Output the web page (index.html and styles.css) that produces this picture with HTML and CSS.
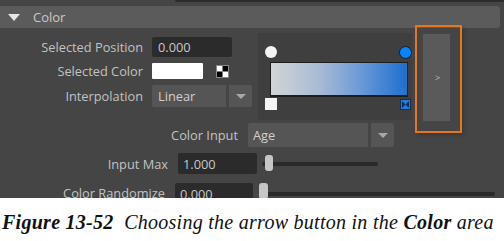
FILE: index.html
```html
<!DOCTYPE html>
<html>
<head>
<meta charset="utf-8">
<link rel="stylesheet" href="styles.css">
</head>
<body>
<div class="shot">
  <div class="topstrip"><div class="topfield"></div></div>
  <div class="header"><span class="tri"></span><span class="htitle">Color</span></div>
  <div class="upper">
    <div class="form">
      <div class="row r1"><span class="lbl w143">Selected Position</span><div class="field f80">0.000</div></div>
      <div class="row r2"><span class="lbl w143">Selected Color</span><div class="swatch"></div>
        <svg class="checker" width="13" height="13" viewBox="0 0 13 13"><rect x="0.5" y="0.5" width="12" height="12" fill="#fff" stroke="#888"/><rect x="6.5" y="1" width="5.5" height="5.5" fill="#000"/><rect x="1" y="6.5" width="5.5" height="5.5" fill="#000"/></svg>
      </div>
      <div class="row r3"><span class="lbl w143">Interpolation</span>
        <div class="combo"><div class="combo-main c74">Linear</div><div class="combo-arrow"><span class="caret"></span></div></div>
      </div>
    </div>
    <div class="grad-panel">
      <div class="marks top"><span class="dot white"></span><span class="dot blue"></span></div>
      <div class="ramp"></div>
      <div class="marks bottom"><span class="sq"></span>
        <svg class="bsq" width="11" height="11" viewBox="0 0 11 11"><rect x="0.5" y="0.5" width="10" height="10" fill="#1f7ee2" stroke="#0e2f5a"/><polygon points="2,2 5.5,5.5 2,9" fill="#0e2f5a"/><polygon points="9,2 5.5,5.5 9,9" fill="#0e2f5a"/></svg>
      </div>
    </div>
    <div class="side-btn"><span class="chev">&gt;</span></div>
  </div>
  <div class="lower">
    <div class="row l1"><span class="lbl w238">Color Input</span>
      <div class="combo tall"><div class="combo-main c120">Age</div><div class="combo-arrow"><span class="caret"></span></div></div>
    </div>
    <div class="row l2"><span class="lbl w168">Input Max</span><div class="field f79">1.000</div>
      <div class="slider s1"><span class="track"></span><span class="handle"></span></div>
    </div>
    <div class="row l3"><span class="lbl w165">Color Randomize</span><div class="field f78">0.000</div>
      <div class="slider s2"><span class="track"></span><span class="handle"></span></div>
    </div>
  </div>
  <div class="highlight"></div>
</div>
<p class="caption"><b>Figure 13-52</b>&nbsp; Choosing the arrow button in the <b>Color</b> area</p>
</body>
</html>
```
FILE: styles.css
```css
html, body { margin: 0; padding: 0; background: #fff; }
body { width: 504px; height: 241px; overflow: hidden; }
.shot {
  position: relative;
  width: 504px; height: 198px; overflow: hidden;
  background: #454545;
  font-family: "Open Sans", "DejaVu Sans", sans-serif;
  font-size: 12.8px; color: #c2c2c2;
}
.topstrip { height: 6px; display: flex; justify-content: flex-end; }
.topfield { width: 329px; height: 2px; background: #2c2c2c; border-bottom-left-radius: 2px; }
.header {
  width: 500px; height: 22px; background: #5b5b5b;
  border-radius: 0 3px 3px 0;
  display: flex; align-items: center;
}
.tri {
  width: 0; height: 0; margin-left: 8px;
  border-left: 6px solid transparent; border-right: 6px solid transparent;
  border-top: 7px solid #e6e6e6;
}
.htitle { margin-left: 13px; font-size: 13px; color: #c9c9c9; }
.upper { display: flex; height: 92px; }
.form { width: 252px; padding-top: 9px; }
.row { display: flex; align-items: center; }
.r1 { height: 20px; }
.r2 { height: 16px; margin-top: 6px; }
.r3 { height: 22px; margin-top: 6px; }
.lbl { text-align: right; white-space: nowrap; margin-right: 9px; flex: none; }
.w143 { width: 143px; }
.w238 { width: 238px; margin-right: 10px; }
.w168 { width: 168px; margin-right: 10px; }
.w165 { width: 165px; margin-right: 10px; }
.field {
  height: 100%; background: #2b2b2b; border-radius: 2px;
  box-sizing: border-box; padding-left: 6px;
  display: flex; align-items: center; color: #c8c8c8; flex: none;
}
.f80 { width: 80px; }
.f79 { width: 79px; padding-left: 5px; }
.f78 { width: 78px; padding-left: 5px; }
.swatch { width: 51px; height: 16px; background: #fff; border-radius: 1px; }
.checker { margin-left: 13px; }
.combo { display: flex; height: 100%; gap: 3px; }
.combo-main {
  background: #555; border-radius: 2px 0 0 2px;
  display: flex; align-items: center; padding-left: 6px; box-sizing: border-box;
  color: #cfcfcf;
}
.c74 { width: 74px; }
.c120 { width: 120px; padding-left: 5px; }
.combo-arrow {
  width: 23px; background: #555; border-radius: 0 2px 2px 0;
  display: flex; align-items: center; justify-content: center;
}
.caret {
  width: 0; height: 0;
  border-left: 5px solid transparent; border-right: 5px solid transparent;
  border-top: 5px solid #a8a8a8;
}
.grad-panel {
  width: 154px; height: 87px; margin-left: 6px; margin-top: 5px;
  background: #3f3f3f; box-sizing: border-box; padding: 13px 1px 0 7px;
}
.marks { display: flex; justify-content: space-between; }
.marks.top { align-items: center; height: 12px; }
.dot { width: 12px; height: 12px; border-radius: 50%; box-sizing: border-box; flex: none; }
.dot.white { background: #f4f4f4; }
.dot.blue { width: 13px; height: 13px; background: #0a84f5; border: 1px solid #1a1a1a; margin-right: -1px; }
.ramp {
  margin: 4px 3px 0 5px; height: 35px; box-sizing: border-box;
  border: 1px solid #1d1d1d; border-bottom-width: 2px;
  background: linear-gradient(to right, #d2d4d6 0%, #a9bcd4 35%, #6c9bd8 65%, #1e6fd0 100%);
}
.marks.bottom { margin-top: 1px; align-items: flex-start; }
.sq { width: 12px; height: 12px; background: #f4f4f4; }
.bsq { margin-top: 1px; }
.side-btn {
  width: 27px; height: 87px; margin-left: 11px; margin-top: 6px;
  background: #5a5a5a; display: flex; align-items: center; justify-content: center;
}
.chev { font-size: 9px; color: #b8bccc; line-height: 1; margin-left: 2px; }
.lower { padding-top: 3px; }
.l1 { height: 24px; }
.l2 { height: 21px; margin-top: 6px; }
.l3 { height: 21px; margin-top: 9px; align-items: flex-start; }
.l3 .lbl { margin-top: 1px; }
.slider { position: relative; height: 100%; display: flex; align-items: center; flex: none; }
.s1 { width: 116px; margin-left: 5px; }
.s2 { width: 236px; margin-left: 6px; }
.track { display: block; width: 100%; height: 4px; background: #2a2a2a; border-radius: 2px; }
.handle {
  position: absolute; width: 8px; height: 16px; background: #c6c6c6; border-radius: 3px;
}
.s1 .handle { left: 3px; top: 2px; }
.s2 .handle { left: 0; top: 0; width: 9px; }
.highlight {
  position: absolute; left: 415px; top: 25px; width: 47px; height: 108px;
  box-sizing: border-box; border: 2px solid #e8771a;
  box-shadow: 2px 2px 4px rgba(0,0,0,0.18);
}
.caption {
  margin: 0; padding: 12px 0 0 2px;
  font-family: "Liberation Serif", serif; font-style: italic;
  font-size: 20px; letter-spacing: 0.27px; line-height: 24px; color: #111; white-space: nowrap;
}
.caption b { font-weight: bold; }
```
